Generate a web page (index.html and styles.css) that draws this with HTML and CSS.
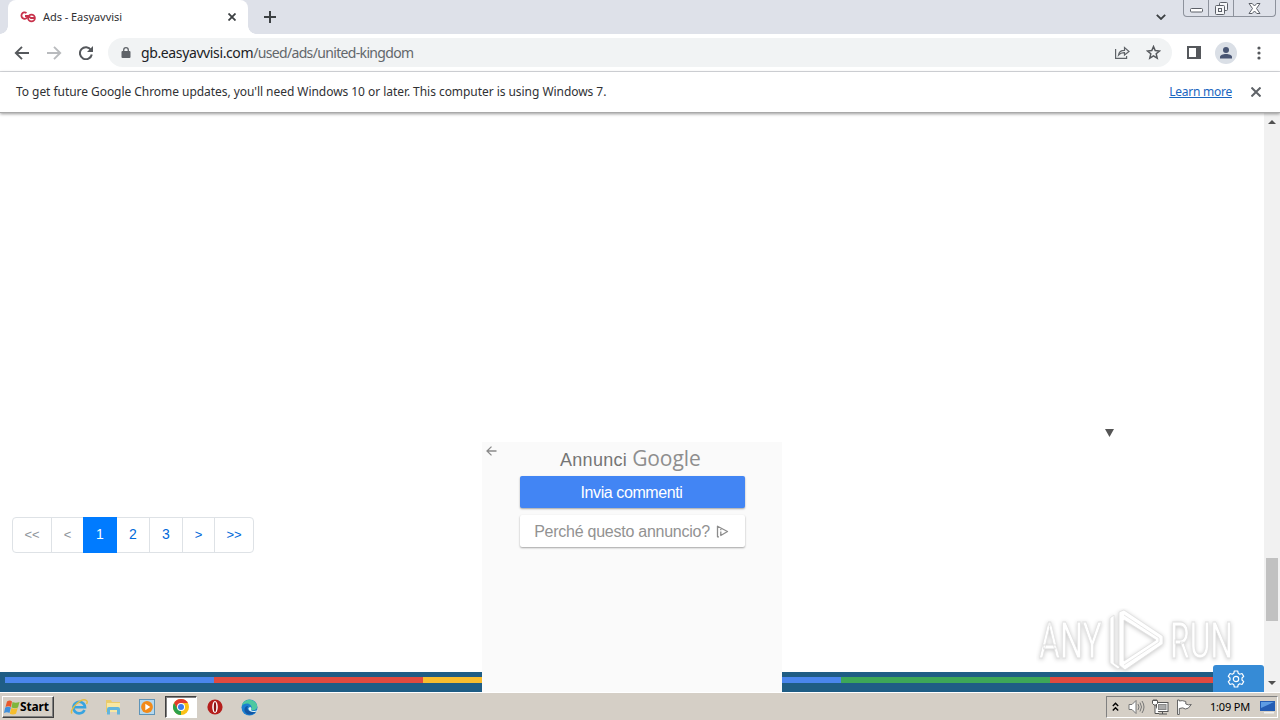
FILE: index.html
```html
<!DOCTYPE html>
<html lang="en">
<head>
    <meta charset="UTF-8">
    <title>Ads - Easyavvisi</title>
    <link rel="stylesheet" href="styles.css">
</head>
<body>
<div class="screen">
    <div class="tabstrip">
        <div class="tab">
            <svg class="favicon" width="16" height="12" viewBox="0 0 16 12" fill="none" stroke="#c8324c" stroke-width="1.800">
                <path d="M6.500 2A3.200 3.200 0 1 0 7.800 5H5"/>
                <circle cx="11.500" cy="7" r="3.400"/>
                <path d="M8 5l3 2h3"/>
            </svg>
            <span class="tab-title">Ads - Easyavvisi</span>
            <svg class="tab-close" width="8" height="8" viewBox="0 0 8 8" stroke="#3c4043" stroke-width="1.8"><path d="M.5 .5l7 7M7.5 .5l-7 7"/></svg>
        </div>
        <svg class="new-tab" width="12" height="12" viewBox="0 0 12 12" stroke="#3c4043" stroke-width="2"><path d="M6 0v12M0 6h12"/></svg>
        <svg class="tab-search" width="10" height="6" viewBox="0 0 10 6" fill="none" stroke="#3c4043" stroke-width="1.8"><path d="M.8 .8L5 5L9.2 .8"/></svg>
        <div class="win-btns">
            <span class="win-btn"><svg width="13" height="6" viewBox="0 0 13 6"><rect x=".5" y="1.5" width="12" height="3.5" rx="1" fill="#fff" stroke="#5c6068"/></svg></span>
            <span class="win-btn"><svg width="13" height="13" viewBox="0 0 13 13" fill="#f5f6f8" stroke="#5c6068"><rect x="4.5" y=".5" width="8" height="8" rx="1"/><rect x=".5" y="3.5" width="9" height="9" rx="1"/><rect x="3.5" y="6.5" width="3" height="3"/></svg></span>
            <span class="win-btn"><svg width="13" height="11" viewBox="0 0 13 11"><path d="M1 .5h3.200L6.500 3 8.800.5H12L8.500 5.500 12 10.500H8.800L6.500 8 4.200 10.500H1L4.500 5.500z" fill="#fff" stroke="#5c6068"/></svg></span>
        </div>
    </div>

    <div class="toolbar">
        <svg class="nav back" width="16" height="14" viewBox="0 0 16 14" fill="none" stroke="#55585c" stroke-width="1.9"><path d="M15 7H2M8 .8L1.800 7L8 13.200"/></svg>
        <svg class="nav forward" width="16" height="14" viewBox="0 0 16 14" fill="none" stroke="#b9bbbe" stroke-width="1.9"><path d="M1 7h13M8 .8L14.200 7L8 13.200"/></svg>
        <svg class="nav reload" width="14" height="14" viewBox="0 0 14 14"><path d="M12 4A6 6 0 1 0 12.800 8.500" fill="none" stroke="#55585c" stroke-width="2"/><path d="M14 0v6H8z" fill="#55585c"/></svg>
        <div class="omnibox">
            <svg width="10" height="12" viewBox="0 0 10 12"><rect x=".5" y="4" width="9" height="7" rx="1" fill="#5f6368"/><path d="M2.700 5V3a2.300 2.300 0 0 1 4.600 0v2" fill="none" stroke="#5f6368" stroke-width="1.300"/></svg>
            <span class="url"><b>gb.easyavvisi.com</b>/used/ads/united-kingdom</span>
            <svg class="share" width="15" height="13" viewBox="0 0 15 13" fill="none" stroke="#5f6368" stroke-width="1.200"><path d="M.6 3v9.400h11V10M3.500 9c.5-3.500 2.500-4.700 6-4.700V1.500L14 5.500 9.500 9V6.600C6.500 6.500 5 7.200 3.500 9z"/></svg>
            <svg class="star" width="15" height="15" viewBox="0 0 15 15" fill="none" stroke="#55585c" stroke-width="1.500"><path d="M7.500 1.600L9.200 5.600 13.500 6 10.200 8.800 11.200 13.100 7.500 10.800 3.800 13.100 4.800 8.800 1.500 6 5.800 5.600z"/></svg>
        </div>
        <svg class="panel" width="14" height="13" viewBox="0 0 14 13"><rect x="1" y="1" width="12" height="11" fill="none" stroke="#55585c" stroke-width="2"/><path d="M9 0h5v13H9z" fill="#55585c"/></svg>
        <svg class="avatar" width="22" height="22" viewBox="0 0 22 22"><circle cx="11" cy="11" r="11" fill="#dadfe6"/><circle cx="11" cy="8" r="3" fill="#485573"/><path d="M5 16.500v-1.500c0-4 12-4 12 0v1.500z" fill="#485573"/></svg>
        <svg class="more" width="4" height="14" viewBox="0 0 4 14" fill="#55585c"><circle cx="2" cy="2" r="1.600"/><circle cx="2" cy="7" r="1.600"/><circle cx="2" cy="12" r="1.600"/></svg>
    </div>

    <div class="infobar">
        <span class="info-text">To get future Google Chrome updates, you'll need Windows 10 or later. This computer is using Windows 7.</span>
        <a class="learn">Learn more</a>
        <svg width="10" height="10" viewBox="0 0 10 10" stroke="#5f6368" stroke-width="2"><path d="M.5 .5l9 9M9.500 .5l-9 9"/></svg>
    </div>

    <div class="page">
        <div class="content">
            <ul class="pagination">
                <li class="disabled">&lt;&lt;</li>
                <li class="disabled">&lt;</li>
                <li class="active">1</li>
                <li>2</li>
                <li>3</li>
                <li class="arrow">&gt;</li>
                <li class="arrow">&gt;&gt;</li>
            </ul>
            <div class="footer">
                <div class="stripes"><i class="blue"></i><i class="red"></i><i class="yellow"></i><i class="blue"></i><i class="green"></i><i class="red"></i></div>
            </div>

            <svg class="caret" width="9" height="8" viewBox="0 0 9 8"><path d="M0 0h9L4.500 8z" fill="#555"/></svg>

            <div class="ad">
                <svg class="ad-back" width="11" height="10" viewBox="0 0 11 10" fill="none" stroke="#8a8a8a" stroke-width="1.300"><path d="M10.500 5H1.200M5.500 .6L1 5l4.500 4.400"/></svg>
                <div class="ad-title"><span class="ad-by">Annunci</span><span class="ad-logo">Google</span></div>
                <div class="ad-btn primary"><span>Invia commenti</span></div>
                <div class="ad-btn"><span>Perché questo annuncio?</span>
                    <svg width="13" height="13" viewBox="0 0 13 13" fill="none" stroke="#8c8c8c" stroke-width="1.300" stroke-linejoin="round"><path d="M3 11.800H1.500V1.200L11.500 6.500 4.800 10.500V6.500M4.800 4v1.300"/></svg>
                </div>
            </div>

            <div class="settings">
                <svg width="18" height="18" viewBox="0 0 18 18" fill="none" stroke="#fff" stroke-width="1.200" stroke-linejoin="round"><path d="M7.300 1h3.400l.5 2.300 1.500.9 2.300-.7 1.700 2.900L15 8v2l1.700 1.600-1.700 2.900-2.300-.7-1.500.9-.5 2.300H7.300l-.5-2.300-1.500-.9-2.300.7-1.700-2.900L3 10V8L1.300 6.400 3 3.500l2.300.7 1.500-.9z"/><circle cx="9" cy="9" r="2.700"/></svg>
            </div>

            <svg class="watermark" width="204" height="64" viewBox="0 0 204 64">
                <g class="wm-shape">
                    <text x="3" y="50" textLength="63" lengthAdjust="spacingAndGlyphs">ANY</text>
                    <text x="134" y="50" textLength="63" lengthAdjust="spacingAndGlyphs">RUN</text>
                    <path d="M74 55V10l4-3v48l6 4-2 2zM83 57V4l5-2 39 26v8L89 62zM88 12v41l32-21z" fill-rule="evenodd"/>
                    <path d="M88 7l35 23v4L88 57" fill="none"/>
                </g>
            </svg>
        </div>
        <div class="scrollbar">
            <svg width="8" height="4" viewBox="0 0 8 4"><path d="M0 4L4 0l4 4z" fill="#505050"/></svg>
            <div class="thumb"></div>
            <svg width="8" height="4" viewBox="0 0 8 4"><path d="M0 0h8L4 4z" fill="#505050"/></svg>
        </div>
    </div>

    <div class="taskbar">
        <div class="start">
            <svg width="16" height="15" viewBox="0 0 16 15"><path d="M3 1.500q3-2 5 0L7 7Q4.500 5.500 1.500 7z" fill="#e8582c"/><path d="M8.500 2q3 1.500 7 0L14 7.500q-3 1.300-6.500 0z" fill="#7fb63c"/><path d="M1.200 7.500q3-1.500 5.700 0L5.500 13q-2.500-1.500-5.500 0z" fill="#3f8fdc"/><path d="M7.400 8q3 1.500 6.300 0L12 13.800q-3 1.500-6.200 0z" fill="#f5bd2d"/></svg>
            <span>Start</span>
        </div>
        <div class="quick">
            <span class="task"><svg width="18" height="18" viewBox="0 0 18 18" fill="none"><path d="M14.500 12A5.800 5.800 0 1 1 15 9.200H4" stroke="#38a4e0" stroke-width="2.600"/><path d="M2 15.500C-1 12 11-1 16.500 2.500c1 .8.600 2.500 0 3.500" stroke="#e5bd43" stroke-width="1.400"/></svg></span>
            <span class="task"><svg width="18" height="18" viewBox="0 0 18 18"><path d="M2 2h5l1 2h8v10H2z" fill="#eacb6b"/><path d="M3 5h13v9H3z" fill="#f8e7a2"/><path d="M3 16.500V11q0-2 2-2h9q2 0 2 2v5.500h-3V12H6v4.500z" fill="#63b5dc"/></svg></span>
            <span class="task"><svg width="18" height="18" viewBox="0 0 18 18"><rect x="1.500" y="1.500" width="15" height="15" fill="#b5d8ee" stroke="#5e94b8"/><circle cx="9" cy="9" r="5.900" fill="#f28a19"/><path d="M7.300 5.800v6.400l5-3.200z" fill="#fff"/></svg></span>
            <span class="task pressed"><svg width="16" height="16" viewBox="0 0 16 16"><circle cx="8" cy="8" r="8" fill="#fbc116"/><path d="M1.070 4A8 8 0 0 1 14.930 4H8L4.500 10z" fill="#e33b2e"/><path d="M1.070 4L4.540 10 8 12 8 16A8 8 0 0 1 1.070 4z" fill="#2da14c"/><circle cx="8" cy="8" r="4" fill="#fff"/><circle cx="8" cy="8" r="3" fill="#3b7ded"/></svg></span>
            <span class="task"><svg width="16" height="16" viewBox="0 0 16 16"><circle cx="8" cy="8" r="7.600" fill="#b51e1c"/><ellipse cx="8" cy="8" rx="2.800" ry="6" fill="#fff"/><ellipse cx="8" cy="8" rx="1.200" ry="5" fill="#8d1414"/></svg></span>
            <span class="task"><svg width="17" height="17" viewBox="0 0 17 17"><circle cx="8.500" cy="8.500" r="8" fill="#1b7fd0"/><path d="M.8 7C2-.5 13-1.500 16 6c1.300 5-4 6-6 4.500 2-3-1-6-4-6-2.500 0-4.500 1-5.200 2.500z" fill="#4cc8a0"/><path d="M7 7c-2 3 .5 7 8 5-2 4-8 5-11 1C2.500 9.500 4.500 7 7 7z" fill="#1256a4"/><path d="M9 8c2 0 1 3 1 3 1 1.300 3.500 1.400 7 .2l-1 1.300C11 14 7 12 7.500 9z" fill="#e3f4f4"/></svg></span>
        </div>
        <div class="tray">
            <svg class="chev" width="7" height="10" viewBox="0 0 7 10" fill="none" stroke="#000" stroke-width="1.400"><path d="M.8 4L3.500 1.300 6.200 4M.8 8.500L3.500 5.800 6.200 8.500"/></svg>
            <svg class="sound" width="17" height="16" viewBox="0 0 17 16" fill="none" stroke="#777"><path d="M1 5.500h3l4-4v13l-4-4H1z" fill="#fff"/><path d="M10 5q2 3 0 6M12 3.500q3 4.500 0 9M14 2q4 6 0 12"/></svg>
            <svg class="network" width="17" height="16" viewBox="0 0 17 16" stroke="#555"><rect x="4.500" y="3.500" width="11.500" height="9" fill="#fff"/><rect x="6.500" y="5.500" width="7.500" height="5" fill="#aaa" stroke="#888"/><path d="M7 15h8M10.500 12v3" fill="none"/><path d="M.5 1.500h5v3L4 6H2L.5 4.500zM3 6v8.500h4M2 0v2M4 0v2" fill="#fff"/></svg>
            <svg class="flag" width="17" height="16" viewBox="0 0 17 16" fill="#fff" stroke="#666"><path d="M1.500 1v14.500h1.800V9.500q4-1.500 6 .5 3 .5 6-4.500-3 1-5.500-.5V2.500Q6 1 3.300 2V1z"/></svg>
            <span class="clock">1:09 PM</span>
            <svg class="desk" width="16" height="14" viewBox="0 0 16 14"><path d="M0 1h15v10H0z" fill="#245db4"/><path d="M1 2h13L1 8z" fill="#5d9ce4"/><path d="M4 12h10v1.500H4z" fill="#f0f0f0"/></svg>
        </div>
    </div>
</div>
</body>
</html>
```
FILE: styles.css
```css
body,ul,li{margin:0;padding:0;}
ul{list-style-type:none;}
svg{display:block;flex:none;}
body{background:#fff;font:12px/16px "Noto Sans","Open Sans",sans-serif;color:#303134;}
.screen{width:1280px;height:720px;display:flex;flex-direction:column;overflow:hidden;}

/* tabs */
.tabstrip{height:34px;background:#dee1e9;display:flex;align-items:flex-start;padding-left:8px;box-sizing:border-box;flex:none;}
.tab{position:relative;width:240px;height:34px;background:#fff;border-radius:8px 8px 0 0;display:flex;align-items:center;padding:0 12px;box-sizing:border-box;}
.tab:before,.tab:after{content:"";position:absolute;bottom:0;width:8px;height:8px;}
.tab:before{left:-8px;background:radial-gradient(circle at 0 0,#dee1e9 7.5px,#fff 8px);}
.tab:after{right:-8px;background:radial-gradient(circle at 100% 0,#dee1e9 7.5px,#fff 8px);}
.tab-title{margin-left:7px;font-size:11px;flex:1;letter-spacing:-.05px;}
.new-tab{margin:11px 0 0 16px;}
.tab-search{margin:14px 17px 0 auto;}
.win-btns{display:flex;height:17px;width:93px;margin-right:4px;border:1px solid #8d929c;border-top:0;border-radius:0 0 4px 4px;box-sizing:border-box;}
.win-btn{width:24px;display:flex;align-items:center;justify-content:center;border-right:1px solid #8d929c;}
.win-btn:last-child{flex:1;border:0;}
.win-btn:first-child svg{margin-top:4px;}

/* toolbar */
.toolbar{height:37px;display:flex;align-items:center;padding-left:14px;border-bottom:1px solid #dadce0;flex:none;}
.forward{margin-left:16px;}
.reload{margin-left:17px;}
.omnibox{width:1064px;height:29px;border-radius:15px;background:#f1f3f4;margin-left:15px;padding:0 11px 0 13px;box-sizing:border-box;display:flex;align-items:center;flex:none;}
.url{margin-left:10px;font-size:14px;letter-spacing:-.66px;color:#63676b;flex:1;}
.url b{font-weight:400;color:#202124;letter-spacing:-.38px;}
.star{margin-left:16px;}
.panel{margin-left:15px;}
.avatar{margin-left:14px;}
.more{margin-left:20px;}

/* update notice */
.infobar{position:relative;z-index:2;height:40px;display:flex;align-items:center;padding:0 19px 0 16px;background:#fff;border-bottom:1px solid #a9a9a9;box-shadow:0 1px 3px rgba(0,0,0,.4);flex:none;}
.info-text{flex:1;white-space:nowrap;letter-spacing:-.05px;}
.learn{color:#1a66c0;text-decoration:underline;letter-spacing:-.25px;margin-right:19px;}

/* web page */
.page{flex:1;display:flex;min-height:0;}
.content{position:relative;flex:1;display:flex;flex-direction:column;}
.pagination{display:flex;margin:404px 0 0 12px;font:14px/33px "Liberation Sans",Arial,sans-serif;color:#0069d9;}
.pagination li{width:32px;height:34px;border:1px solid #dee2e6;margin-left:-1px;text-align:center;}
.pagination li:first-child{width:38px;margin-left:0;border-radius:4px 0 0 4px;}
.pagination li:last-child{width:38px;border-radius:0 4px 4px 0;}
.pagination li:nth-child(2),.pagination li:nth-child(6){width:31px;}
.pagination .disabled{color:#8f959b;}
.pagination .disabled,.pagination .arrow{font-size:13px;}
.pagination .active{background:#007bff;border-color:#007bff;color:#fff;position:relative;}
.footer{margin-top:auto;height:20px;padding:5px 0 0 5px;box-sizing:border-box;background:#1f5d85;}
.stripes{display:flex;height:6px;overflow:hidden;}
.stripes i{width:209px;flex:none;}
.blue{background:#4a86ed;}
.red{background:#e04a3f;}
.yellow{background:#f8bc2e;}
.green{background:#3da758;}
.caret{position:absolute;left:1105px;top:316px;}

.ad{position:absolute;left:482px;bottom:0;width:300px;height:250px;background:#fafafa;font:16px/33px "Liberation Sans",Arial,sans-serif;color:#929292;}
.ad-back{position:absolute;left:4px;top:4px;}
.ad-title{display:flex;align-items:baseline;height:34px;margin-left:78px;line-height:34px;color:#757575;}
.ad-by{font-size:18px;letter-spacing:.3px;}
.ad-logo{font:500 21px/32px "Open Sans","Noto Sans",sans-serif;margin-left:5px;color:#8e8e8e;letter-spacing:-.1px;}
.ad-btn{display:flex;align-items:center;justify-content:center;gap:6px;width:225px;height:32px;margin:0 0 7px 38px;padding-right:2px;box-sizing:border-box;background:#fff;border-radius:2px;box-shadow:0 1px 2px rgba(0,0,0,.35);letter-spacing:-.25px;}
.ad-btn.primary{background:#4285f4;color:#fff;letter-spacing:-.4px;}

.watermark{position:absolute;left:1036px;bottom:20px;}
.wm-shape{font:400 50px "Roboto","Liberation Sans",sans-serif;fill:#fff;stroke:#e0e0e0;stroke-width:.8;filter:drop-shadow(0 1px 2px rgba(0,0,0,.22));}
.settings{position:absolute;right:0;bottom:0;width:51px;height:27px;background:#368bd6;border-radius:3px 3px 0 0;display:flex;align-items:center;justify-content:center;padding-right:5px;box-sizing:border-box;}

.scrollbar{width:16px;background:#f1f1f1;display:flex;flex-direction:column;align-items:center;padding:7px 0;box-sizing:border-box;}
.thumb{width:12px;height:63px;background:#c1c1c1;margin:434px 0 auto;}

/* taskbar */
.taskbar{height:28px;background:#d5cfc6;border-top:1px solid #fff;box-sizing:border-box;display:flex;align-items:center;padding:1px 2px 0;flex:none;color:#000;}
.start{width:52px;height:22px;box-sizing:border-box;border:1px solid;border-color:#fff #404040 #404040 #fff;box-shadow:inset -1px -1px #808080;display:flex;align-items:center;padding-left:1px;font:bold 12px/16px "Noto Sans",sans-serif;letter-spacing:-.15px;}
.quick{display:flex;margin-left:9px;gap:2px;}
.task{width:32px;height:22px;display:flex;align-items:center;justify-content:center;box-sizing:border-box;}
.pressed{background:#fff;border:1px solid;border-color:#404040 #fff #fff #404040;box-shadow:inset 1px 1px #808080;}
.tray{display:flex;align-items:center;margin-left:auto;width:172px;height:22px;box-sizing:border-box;border:1px solid;border-color:#808080 #fff #fff #808080;padding-left:5px;}
.sound{margin-left:9px;}
.network{margin-left:7px;}
.flag{margin-left:7px;}
.clock{margin-left:17px;font-size:11px;letter-spacing:-.2px;white-space:nowrap;flex:1;}
.desk{margin-right:1px;}
```
